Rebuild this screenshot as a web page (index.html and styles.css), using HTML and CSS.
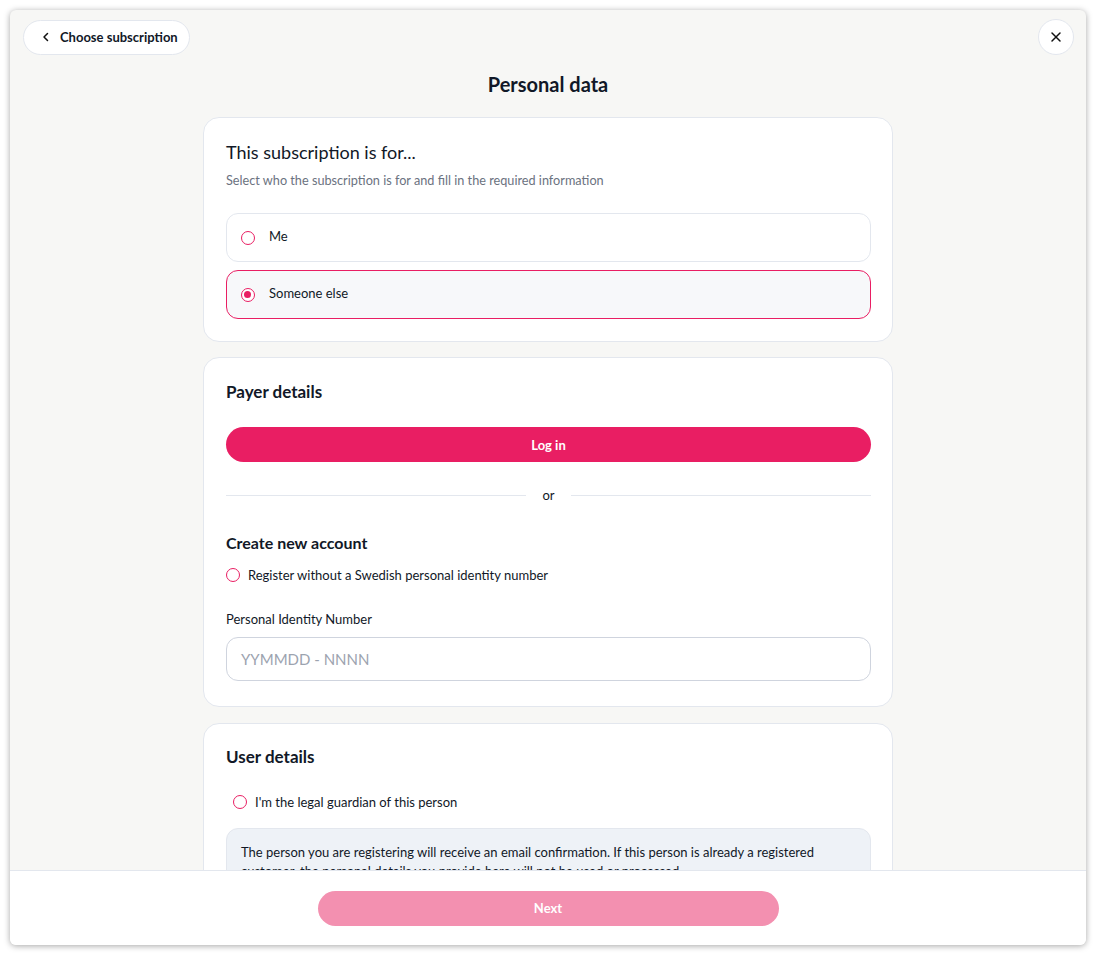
FILE: index.html
```html
<!DOCTYPE html>
<html lang="en">
<head>
<meta charset="utf-8">
<title>Personal data</title>
<link rel="stylesheet" href="styles.css">
</head>
<body>
<div class="frame">
  <div class="modal">
    <div class="scroll">
      <div class="topbar">
        <button class="back-btn">
          <svg width="12" height="12" viewBox="0 0 12 12"><path d="M7.5 2.5 L4 6 L7.5 9.5" fill="none" stroke="#111" stroke-width="1.5" stroke-linecap="round" stroke-linejoin="round"/></svg>
          <span>Choose subscription</span>
        </button>
        <button class="close-btn" aria-label="Close">
          <svg width="12" height="12" viewBox="0 0 12 12"><path d="M2 2 L10 10 M10 2 L2 10" fill="none" stroke="#111" stroke-width="1.5" stroke-linecap="round"/></svg>
        </button>
      </div>
      <h1 class="page-title">Personal data</h1>

      <div class="cards">
        <section class="card card-for">
          <h2 class="card-lead">This subscription is for...</h2>
          <p class="card-sub">Select who the subscription is for and fill in the required information</p>
          <div class="options">
            <label class="option">
              <span class="radio"></span>
              <span class="option-text">Me</span>
            </label>
            <label class="option selected">
              <span class="radio checked"></span>
              <span class="option-text">Someone else</span>
            </label>
          </div>
        </section>

        <section class="card card-payer">
          <h2 class="card-title">Payer details</h2>
          <button class="primary-btn">Log in</button>
          <div class="divider"><span>or</span></div>
          <h3 class="sub-title">Create new account</h3>
          <label class="inline-radio">
            <span class="radio"></span>
            <span>Register without a Swedish personal identity number</span>
          </label>
          <div class="field">
            <label class="field-label">Personal Identity Number</label>
            <div class="input">YYMMDD - NNNN</div>
          </div>
        </section>

        <section class="card card-user">
          <h2 class="card-title">User details</h2>
          <label class="inline-radio guardian">
            <span class="radio"></span>
            <span>I'm the legal guardian of this person</span>
          </label>
          <div class="info">The person you are registering will receive an email confirmation. If this person is already a registered customer, the personal details you provide here will not be used or processed.</div>
        </section>
      </div>
    </div>
    <div class="footer">
      <button class="next-btn">Next</button>
    </div>
  </div>
</div>
</body>
</html>
```

FILE: styles.css
```css
* { box-sizing: border-box; }
html, body { margin: 0; padding: 0; background: #ffffff; }
body {
  font-family: "Lato", "Noto Sans", sans-serif;
  color: #111827;
  width: 1096px;
  height: 955px;
  overflow: hidden;
}
.frame {
  padding: 10px;
  height: 955px;
}
.modal {
  width: 1076px;
  height: 935px;
  background: #f7f7f5;
  border-radius: 6px;
  box-shadow: 0 1px 6px rgba(0,0,0,0.35);
  display: flex;
  flex-direction: column;
  overflow: hidden;
}
.scroll {
  flex: 1;
  overflow: hidden;
  padding: 9px 13px 0 13px;
}
.topbar {
  display: flex;
  justify-content: space-between;
  align-items: center;
}
.back-btn {
  display: flex;
  align-items: center;
  gap: 8px;
  height: 35px;
  padding: 0 11px 0 16px;
  background: #fff;
  border: 1px solid #e3e7ee;
  border-radius: 18px;
  font-family: inherit;
  font-size: 13px;
  font-weight: 700;
  color: #111827;
}
.close-btn {
  width: 36px;
  height: 36px;
  border-radius: 50%;
  background: #fff;
  border: 1px solid #e3e7ee;
  display: flex;
  align-items: center;
  justify-content: center;
  padding: 0;
  margin-right: -1px;
}
.page-title {
  margin: 16px 0 0 0;
  text-align: center;
  font-size: 20px;
  font-weight: 700;
  line-height: 26px;
  color: #111827;
}
.cards {
  width: 690px;
  margin: 20px auto 0 auto;
  display: flex;
  flex-direction: column;
  gap: 15px;
}
.card {
  background: #fff;
  border: 1px solid #e3e7ee;
  border-radius: 16px;
  padding: 21px 21px 22px 22px;
}
.card-lead {
  margin: 0;
  font-size: 18px;
  font-weight: 400;
  line-height: 26px;
}
.card-sub {
  margin: 7px 0 0 0;
  font-size: 12.7px;
  color: #6b7280;
  line-height: 17px;
}
.options {
  display: flex;
  flex-direction: column;
  gap: 8px;
  margin-top: 24px;
}
.option {
  display: flex;
  align-items: center;
  gap: 14px;
  height: 49px;
  padding: 0 14px;
  border: 1px solid #e3e7ee;
  border-radius: 12px;
  font-size: 13px;
  background: #fff;
}
.option-text {
  padding-bottom: 3px;
}
.option.selected {
  border-color: #e91e63;
  background: #f7f8fa;
}
.radio {
  width: 14px;
  height: 14px;
  border-radius: 50%;
  border: 1.5px solid #e91e63;
  flex: none;
  position: relative;
  background: #fff;
}
.radio.checked::after {
  content: "";
  position: absolute;
  left: 2px;
  top: 2px;
  width: 7px;
  height: 7px;
  border-radius: 50%;
  background: #e91e63;
}
.card-payer { padding-top: 23px; padding-bottom: 25px; }
.card-title {
  margin: 0;
  font-size: 17px;
  font-weight: 700;
  line-height: 22px;
}
.primary-btn {
  display: block;
  width: 100%;
  height: 35px;
  margin-top: 24px;
  border: none;
  border-radius: 18px;
  background: #e91e63;
  color: #fff;
  font-family: inherit;
  font-size: 13px;
  font-weight: 700;
}
.divider {
  display: flex;
  align-items: center;
  gap: 16px;
  margin-top: 25px;
  font-size: 13px;
  color: #111827;
}
.divider::before, .divider::after {
  content: "";
  flex: 1;
  height: 1px;
  background: #e3e7ee;
}
.sub-title {
  margin: 29px 0 0 0;
  font-size: 16px;
  font-weight: 700;
  line-height: 22px;
}
.inline-radio {
  display: flex;
  align-items: center;
  gap: 8px;
  margin-top: 12px;
  font-size: 13px;
  line-height: 18px;
}
.field { margin-top: 26px; }
.field-label {
  display: block;
  font-size: 13px;
  line-height: 18px;
}
.input {
  margin-top: 9px;
  height: 44px;
  border: 1px solid #cfd4de;
  border-radius: 12px;
  padding: 0 14px;
  display: flex;
  align-items: center;
  font-size: 15px;
  color: #9ca3af;
}
.card-user { padding-top: 22px; margin-top: 1px; }
.guardian { margin-top: 25px; padding-left: 7px; }
.info {
  margin-top: 17px;
  background: #eef2f7;
  border: 1px solid #e3e7ee;
  border-radius: 12px;
  padding: 14px 14px;
  font-size: 13px;
  line-height: 19px;
}
.footer {
  flex: none;
  height: 75px;
  background: #fff;
  border-top: 1px solid #e3e7ee;
  display: flex;
  align-items: center;
  justify-content: center;
}
.next-btn {
  width: 461px;
  height: 35px;
  border: none;
  border-radius: 18px;
  background: #f390b0;
  color: #fff;
  font-family: inherit;
  font-size: 13px;
  font-weight: 700;
}
```
